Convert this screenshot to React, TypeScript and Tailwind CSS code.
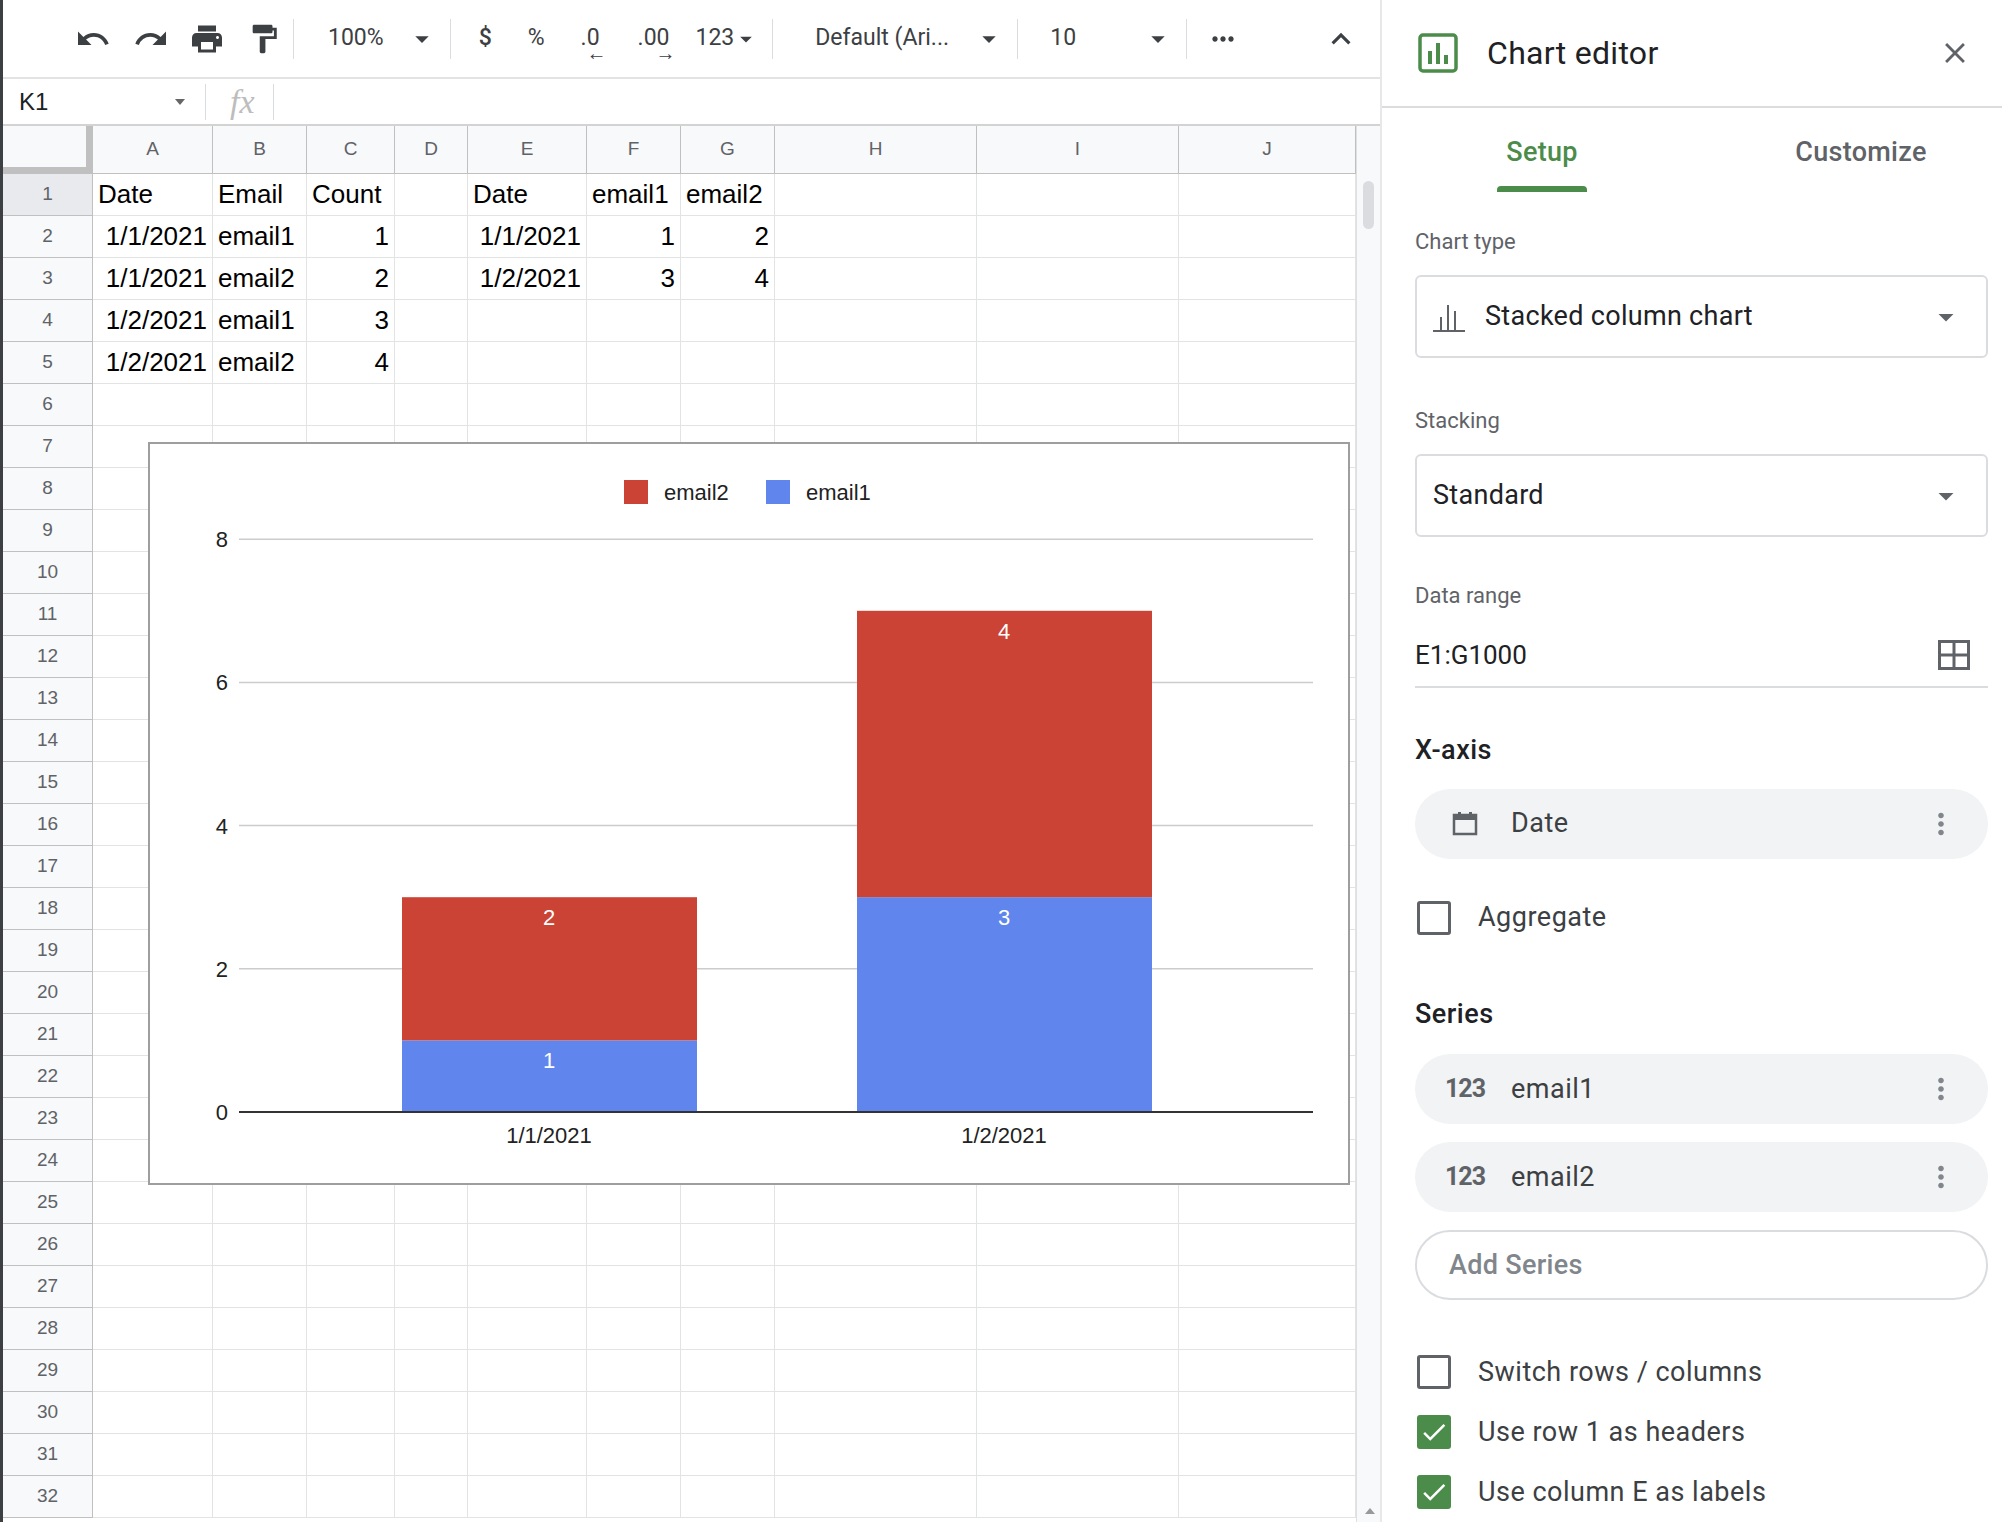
import React from "react";
import { MdUndo, MdRedo, MdPrint, MdFormatPaint, MdMoreHoriz, MdExpandLess, MdArrowDropDown, MdClose, MdMoreVert, MdCheck } from "react-icons/md";

const colW = [120, 94, 88, 73, 119, 94, 94, 202, 202, 177];
const cols = ["A", "B", "C", "D", "E", "F", "G", "H", "I", "J"];
type C = [string, boolean] | null;
const data: C[][] = [
  [["Date", false], ["Email", false], ["Count", false], null, ["Date", false], ["email1", false], ["email2", false]],
  [["1/1/2021", true], ["email1", false], ["1", true], null, ["1/1/2021", true], ["1", true], ["2", true]],
  [["1/1/2021", true], ["email2", false], ["2", true], null, ["1/2/2021", true], ["3", true], ["4", true]],
  [["1/2/2021", true], ["email1", false], ["3", true]],
  [["1/2/2021", true], ["email2", false], ["4", true]],
];

function Sep() {
  return <div className="w-px h-[40px] bg-[#dadce0] mx-[12px]" />;
}

function Toolbar() {
  return (
    <div className="h-[79px] flex items-center border-b-2 border-[#e3e3e3] text-[#3c4043] text-[23px] pl-[72px] pr-[20px]" style={{ fontFamily: "Roboto, sans-serif" }}>
      <MdUndo size={36} className="mr-[22px]" />
      <MdRedo size={36} className="mr-[20px]" />
      <MdPrint size={36} className="mr-[22px]" />
      <MdFormatPaint size={34} />
      <Sep />
      <span className="ml-[22px]">100%</span>
      <MdArrowDropDown size={32} className="ml-[22px]" />
      <Sep />
      <span className="ml-[16px] font-medium">$</span>
      <span className="ml-[36px]">%</span>
      <span className="ml-[36px] relative">.0<span className="absolute left-[6px] top-[17px] text-[20px] font-bold">←</span></span>
      <span className="ml-[38px] relative">.00<span className="absolute left-[18px] top-[17px] text-[20px] font-bold">→</span></span>
      <span className="ml-[26px]">123</span>
      <MdArrowDropDown size={28} className="-ml-[2px]" />
      <Sep />
      <span className="ml-[30px] w-[150px] whitespace-nowrap">Default (Ari...</span>
      <MdArrowDropDown size={32} className="ml-[8px]" />
      <Sep />
      <span className="ml-[20px] w-[70px]">10</span>
      <MdArrowDropDown size={32} className="ml-[22px]" />
      <Sep />
      <MdMoreHoriz size={32} className="ml-[8px]" />
      <div className="flex-1" />
      <MdExpandLess size={38} />
    </div>
  );
}

function FormulaBar() {
  return (
    <div className="h-[47px] flex items-center border-b-2 border-[#d3d3d3]" style={{ fontFamily: "'Liberation Sans', sans-serif" }}>
      <span className="ml-[16px] text-[24px] text-[#202124] w-[156px]">K1</span>
      <span className="w-0 h-0 border-x-[5px] border-x-transparent border-t-[6px] border-t-[#666]" />
      <div className="w-px h-[36px] bg-[#dadce0] ml-[20px]" />
      <span className="ml-[24px] text-[34px] italic text-[#bdbdbd]" style={{ fontFamily: "'Liberation Serif', serif" }}>fx</span>
      <div className="w-px h-[36px] bg-[#dadce0] ml-[18px]" />
    </div>
  );
}

function Grid() {
  return (
    <div className="flex-1 flex overflow-hidden" style={{ fontFamily: "'Liberation Sans', Arial, sans-serif" }}>
      <div className="flex flex-col">
        <div className="flex h-[48px]">
          <div className="w-[90px] bg-[#f8f9fa] border-r-[7px] border-b-[7px] border-[#c0c0c0]" />
          {cols.map((c, i) => (
            <div key={c} style={{ width: colW[i] }} className="bg-[#f8f9fa] border-r border-b border-[#c0c0c0] flex items-center justify-center text-[19px] text-[#5f6368]">{c}</div>
          ))}
        </div>
        {Array.from({ length: 32 }).map((_, r) => (
          <div key={r} className="flex h-[42px]">
            <div className={"w-[90px] border-r border-b border-[#c0c0c0] flex items-center justify-center text-[19px] text-[#5f6368] " + (r === 0 ? "bg-[#e8eaed]" : "bg-[#f8f9fa]")}>{r + 1}</div>
            {cols.map((c, i) => {
              const cell = data[r]?.[i];
              return (
                <div key={c} style={{ width: colW[i] }} className={"border-r border-b border-[#e2e3e3] flex items-center px-[5px] text-[26px] text-black whitespace-nowrap " + (cell && cell[1] ? "justify-end" : "justify-start")}>
                  {cell ? cell[0] : ""}
                </div>
              );
            })}
          </div>
        ))}
      </div>
      <div className="flex-1 bg-[#f8f9fa] border-l border-[#e0e0e0] relative">
        <div className="absolute left-[6px] right-[6px] top-[55px] h-[48px] rounded-full bg-[#dadce0]" />
        <div className="absolute left-[8px] bottom-[8px] w-0 h-0 border-x-[5px] border-x-transparent border-b-[6px] border-b-[#999]" />
      </div>
    </div>
  );
}

function Chart() {
  const base = 668, unit = 71.6;
  const y = (v: number) => base - v * unit;
  const bars = [
    { x: 252, v1: 1, v2: 2, label: "1/1/2021" },
    { x: 707, v1: 3, v2: 4, label: "1/2/2021" },
  ];
  return (
    <div className="absolute left-[145px] top-[442px] w-[1202px] h-[743px] bg-white border-2 border-[#9e9e9e]">
      <svg width="1198" height="739" style={{ fontFamily: "'Liberation Sans', Arial, sans-serif" }}>
        <rect x="474" y="36" width="24" height="24" fill="#cb4335" />
        <text x="514" y="56" fontSize="22" fill="#222">email2</text>
        <rect x="616" y="36" width="24" height="24" fill="#6086ee" />
        <text x="656" y="56" fontSize="22" fill="#222">email1</text>
        {[8, 6, 4, 2].map((v) => (
          <g key={v}>
            <line x1="89" x2="1163" y1={y(v)} y2={y(v)} stroke="#cccccc" strokeWidth="1.5" />
            <text x="78" y={y(v) + 8} fontSize="22" fill="#222" textAnchor="end">{v}</text>
          </g>
        ))}
        {bars.map((b) => (
          <g key={b.label}>
            <rect x={b.x} y={y(b.v1)} width="295" height={b.v1 * unit} fill="#6086ee" />
            <rect x={b.x} y={y(b.v1 + b.v2)} width="295" height={b.v2 * unit} fill="#cb4335" />
            <text x={b.x + 147} y={y(b.v1) + 28} fontSize="22" fill="#fff" textAnchor="middle">{b.v1}</text>
            <text x={b.x + 147} y={y(b.v1 + b.v2) + 28} fontSize="22" fill="#fff" textAnchor="middle">{b.v2}</text>
            <text x={b.x + 147} y={base + 31} fontSize="22" fill="#222" textAnchor="middle">{b.label}</text>
          </g>
        ))}
        <line x1="89" x2="1163" y1={base} y2={base} stroke="#333" strokeWidth="2" />
        <text x="78" y={base + 8} fontSize="22" fill="#222" textAnchor="end">0</text>
      </svg>
    </div>
  );
}

function Pill({ icon, label }: { icon: React.ReactNode; label: string }) {
  return (
    <div className="h-[70px] rounded-full bg-[#f1f3f4] flex items-center pl-[28px] pr-[30px] text-[27px] text-[#3c4043]">
      <div className="w-[44px] flex justify-center">{icon}</div>
      <span className="ml-[24px] flex-1 tracking-[0.5px]">{label}</span>
      <MdMoreVert size={34} className="text-[#80868b]" />
    </div>
  );
}

function Check({ on, label }: { on: boolean; label: string }) {
  return (
    <div className="flex items-center h-[60px] text-[27px] text-[#3c4043]">
      <div className={"w-[34px] h-[34px] rounded-[3px] flex items-center justify-center ml-[2px] " + (on ? "bg-[#4c8c4a]" : "border-[3px] border-[#5f6368]")}>
        {on && <MdCheck size={30} className="text-white" />}
      </div>
      <span className="ml-[27px] tracking-[0.5px]">{label}</span>
    </div>
  );
}

function Panel() {
  const num = <span className="font-bold text-[25px] text-[#5f6368] tracking-[-1px]">123</span>;
  return (
    <div className="w-[622px] h-full border-l-2 border-[#e8e8e8] bg-white flex flex-col" style={{ fontFamily: "Roboto, 'Open Sans', sans-serif" }}>
      <div className="h-[114px] border-b-2 border-[#dadce0] flex items-center pl-[36px] pr-[30px]">
        <svg width="40" height="40" viewBox="0 0 40 40">
          <rect x="2" y="2" width="36" height="36" rx="3" fill="none" stroke="#4c8c4a" strokeWidth="3.5" />
          <rect x="10" y="18" width="4" height="13" fill="#4c8c4a" />
          <rect x="18" y="10" width="4" height="21" fill="#4c8c4a" />
          <rect x="26" y="22" width="4" height="9" fill="#4c8c4a" />
        </svg>
        <span className="ml-[29px] text-[32px] text-[#202124] flex-1 tracking-[0.3px]">Chart editor</span>
        <MdClose size={34} className="text-[#5f6368]" />
      </div>
      <div className="flex h-[89px] text-[27px] font-medium tracking-[0.3px]">
        <div className="w-[290px] flex flex-col items-center justify-end">
          <span className="text-[#4c8c4a] ml-[30px]">Setup</span>
          <div className="w-[90px] h-[6px] rounded-t-[4px] bg-[#4c8c4a] mt-[14px] ml-[30px]" />
        </div>
        <div className="flex-1 flex items-end justify-center pb-[20px]">
          <span className="text-[#5f6368] ml-[48px]">Customize</span>
        </div>
      </div>
      <div className="pl-[33px] pr-[14px] flex flex-col">
        <div className="mt-[33px] text-[22px] text-[#5f6368]">Chart type</div>
        <div className="mt-[17px] h-[83px] border-2 border-[#dadce0] rounded-[6px] flex items-center pl-[16px] pr-[22px]">
          <svg width="32" height="32" viewBox="0 0 32 32">
            <rect x="0" y="29" width="32" height="2" fill="#5f6368" />
            <rect x="7" y="16" width="2" height="13" fill="#5f6368" />
            <rect x="14" y="4" width="2" height="25" fill="#5f6368" />
            <rect x="21" y="10" width="2" height="19" fill="#5f6368" />
          </svg>
          <span className="ml-[20px] text-[27px] text-[#202124] flex-1 tracking-[0.3px]">Stacked column chart</span>
          <MdArrowDropDown size={36} className="text-[#5f6368]" />
        </div>
        <div className="mt-[46px] text-[22px] text-[#5f6368]">Stacking</div>
        <div className="mt-[17px] h-[83px] border-2 border-[#dadce0] rounded-[6px] flex items-center pl-[16px] pr-[22px]">
          <span className="text-[27px] text-[#202124] flex-1 tracking-[0.3px]">Standard</span>
          <MdArrowDropDown size={36} className="text-[#5f6368]" />
        </div>
        <div className="mt-[42px] text-[22px] text-[#5f6368]">Data range</div>
        <div className="mt-[24px] h-[52px] border-b-2 border-[#dadce0] flex items-start pr-[18px]">
          <span className="text-[26px] text-[#202124] flex-1">E1:G1000</span>
          <svg width="32" height="30" viewBox="0 0 32 30" className="mt-[4px]">
            <rect x="1.5" y="1.5" width="29" height="27" fill="none" stroke="#5f6368" strokeWidth="3" />
            <line x1="16" y1="1" x2="16" y2="29" stroke="#5f6368" strokeWidth="3" />
            <line x1="1" y1="15" x2="31" y2="15" stroke="#5f6368" strokeWidth="3" />
          </svg>
        </div>
        <div className="mt-[42px] text-[27px] font-medium text-[#202124] tracking-[0.5px]">X-axis</div>
        <div className="mt-[18px]">
          <Pill label="Date" icon={
            <svg width="26" height="26" viewBox="0 0 26 26"><rect x="2" y="4" width="22" height="19" fill="none" stroke="#5f6368" strokeWidth="2.5" /><rect x="2" y="4" width="22" height="5" fill="#5f6368" /><rect x="6" y="1" width="3" height="4" fill="#5f6368" /><rect x="17" y="1" width="3" height="4" fill="#5f6368" /></svg>
          } />
        </div>
        <div className="mt-[29px]"><Check on={false} label="Aggregate" /></div>
        <div className="mt-[46px] text-[27px] font-medium text-[#202124] tracking-[0.5px]">Series</div>
        <div className="mt-[20px] flex flex-col gap-[18px]">
          <Pill label="email1" icon={num} />
          <Pill label="email2" icon={num} />
          <div className="h-[70px] rounded-full border-2 border-[#dadce0] flex items-center pl-[32px] text-[27px] font-medium text-[#80868b] tracking-[0.3px]">Add Series</div>
        </div>
        <div className="mt-[42px]"><Check on={false} label="Switch rows / columns" /></div>
        <Check on={true} label="Use row 1 as headers" />
        <Check on={true} label="Use column E as labels" />
      </div>
    </div>
  );
}

export default function App() {
  return (
    <div className="w-[2002px] h-[1522px] flex bg-white overflow-hidden">
      <div className="w-[1380px] h-full relative flex flex-col border-l-[3px] border-[#3c4043]">
        <Toolbar />
        <FormulaBar />
        <Grid />
        <Chart />
      </div>
      <Panel />
    </div>
  );
}
